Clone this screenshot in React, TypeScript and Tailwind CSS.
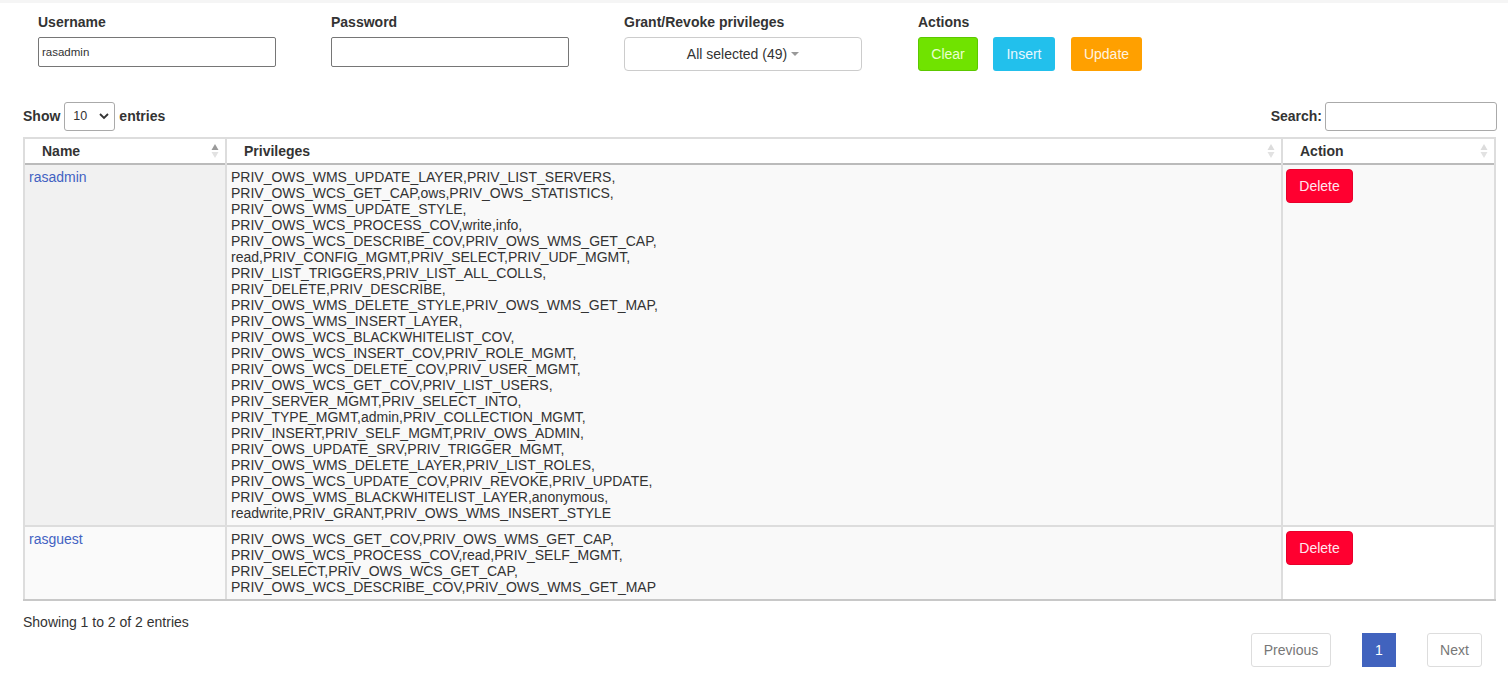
import React from "react";

const row1 = [
  "PRIV_OWS_WMS_UPDATE_LAYER,PRIV_LIST_SERVERS,",
  "PRIV_OWS_WCS_GET_CAP,ows,PRIV_OWS_STATISTICS,",
  "PRIV_OWS_WMS_UPDATE_STYLE,",
  "PRIV_OWS_WCS_PROCESS_COV,write,info,",
  "PRIV_OWS_WCS_DESCRIBE_COV,PRIV_OWS_WMS_GET_CAP,",
  "read,PRIV_CONFIG_MGMT,PRIV_SELECT,PRIV_UDF_MGMT,",
  "PRIV_LIST_TRIGGERS,PRIV_LIST_ALL_COLLS,",
  "PRIV_DELETE,PRIV_DESCRIBE,",
  "PRIV_OWS_WMS_DELETE_STYLE,PRIV_OWS_WMS_GET_MAP,",
  "PRIV_OWS_WMS_INSERT_LAYER,",
  "PRIV_OWS_WCS_BLACKWHITELIST_COV,",
  "PRIV_OWS_WCS_INSERT_COV,PRIV_ROLE_MGMT,",
  "PRIV_OWS_WCS_DELETE_COV,PRIV_USER_MGMT,",
  "PRIV_OWS_WCS_GET_COV,PRIV_LIST_USERS,",
  "PRIV_SERVER_MGMT,PRIV_SELECT_INTO,",
  "PRIV_TYPE_MGMT,admin,PRIV_COLLECTION_MGMT,",
  "PRIV_INSERT,PRIV_SELF_MGMT,PRIV_OWS_ADMIN,",
  "PRIV_OWS_UPDATE_SRV,PRIV_TRIGGER_MGMT,",
  "PRIV_OWS_WMS_DELETE_LAYER,PRIV_LIST_ROLES,",
  "PRIV_OWS_WCS_UPDATE_COV,PRIV_REVOKE,PRIV_UPDATE,",
  "PRIV_OWS_WMS_BLACKWHITELIST_LAYER,anonymous,",
  "readwrite,PRIV_GRANT,PRIV_OWS_WMS_INSERT_STYLE",
];
const row2 = [
  "PRIV_OWS_WCS_GET_COV,PRIV_OWS_WMS_GET_CAP,",
  "PRIV_OWS_WCS_PROCESS_COV,read,PRIV_SELF_MGMT,",
  "PRIV_SELECT,PRIV_OWS_WCS_GET_CAP,",
  "PRIV_OWS_WCS_DESCRIBE_COV,PRIV_OWS_WMS_GET_MAP",
];

function SortIcon({ active }: { active?: boolean }) {
  return (
    <svg width="8" height="18" viewBox="0 0 8 18" className="shrink-0">
      <path d="M4 2 L7.5 8 L0.5 8 Z" fill={active ? "#9a9a9a" : "#dcdcdc"} />
      <path d="M4 16 L7.5 10 L0.5 10 Z" fill="#e2e2e2" />
    </svg>
  );
}

function DeleteBtn() {
  return (
    <button className="h-[34px] w-[67px] rounded-[4px] border border-[#e8002a] bg-[#ff0030] text-[14px] text-[#ffe6ee]">
      Delete
    </button>
  );
}

export default function App() {
  return (
    <div
      className="min-h-[682px] bg-white text-[14px] text-[#333]"
      style={{ fontFamily: '"Liberation Sans", Arial, sans-serif' }}
    >
      <div className="h-[3px] bg-[#f5f5f5]" />
      {/* form row */}
      <div className="flex pl-[38px] pt-[11px]">
        <div className="w-[293px]">
          <div className="mb-[7px] h-[16px] text-[14px] font-bold leading-[16px]">Username</div>
          <div className="flex h-[30px] w-[238px] items-center rounded-[2px] border border-[#767676] px-[3px] pt-[1px] text-[11.5px]">
            rasadmin
          </div>
        </div>
        <div className="w-[293px]">
          <div className="mb-[7px] h-[16px] text-[14px] font-bold leading-[16px]">Password</div>
          <div className="h-[30px] w-[238px] rounded-[2px] border border-[#767676]" />
        </div>
        <div className="w-[294px]">
          <div className="mb-[7px] h-[16px] text-[14px] font-bold leading-[16px]">Grant/Revoke privileges</div>
          <div className="flex h-[34px] w-[238px] items-center justify-center gap-[4px] rounded-[4px] border border-[#ccc] text-[14px]">
            <span>All selected (49)</span>
            <svg width="8" height="5" viewBox="0 0 8 5" className="mt-[1px]">
              <path d="M0 0 L8 0 L4 4 Z" fill="#999" />
            </svg>
          </div>
        </div>
        <div>
          <div className="mb-[7px] h-[16px] text-[14px] font-bold leading-[16px]">Actions</div>
          <div className="flex gap-[15px]">
            <button className="h-[34px] w-[60px] rounded-[3px] border border-[#5cc800] bg-[#70e300] text-[14px] text-[#eaffd0]">
              Clear
            </button>
            <button className="h-[34px] w-[62px] rounded-[3px] bg-[#22c0ec] text-[14px] text-[#e8f8ff]">
              Insert
            </button>
            <button className="ml-[1px] h-[34px] w-[71px] rounded-[3px] bg-[#ffa000] text-[14px] text-[#fff3e0]">
              Update
            </button>
          </div>
        </div>
      </div>

      {/* table area */}
      <div className="ml-[23px] mr-[11px] mt-[31px]">
        <div className="flex items-center justify-between">
          <div className="flex items-center gap-[4px] font-bold">
            <span>Show</span>
            <div className="flex h-[29px] w-[51px] items-center justify-between rounded-[3px] border border-[#aaa] pl-[8px] pr-[5px] text-[12.5px] font-normal">
              <span>10</span>
              <svg width="10" height="7" viewBox="0 0 10 7">
                <path d="M1 1 L5 5 L9 1" fill="none" stroke="#333" strokeWidth="1.8" />
              </svg>
            </div>
            <span>entries</span>
          </div>
          <div className="flex items-center gap-[3px] font-bold">
            <span>Search:</span>
            <div className="h-[29px] w-[172px] rounded-[3px] border border-[#aaa]" />
          </div>
        </div>

        <table className="mt-[6px] w-[1473px] border-collapse text-[14px] leading-[16px]">
          <thead>
            <tr className="h-[26px] border-b-[2px] border-[#bbb]">
              <th className="w-[202px] border-2 border-b-0 border-[#ddd] pl-[17px] pr-[6px] text-left font-bold">
                <div className="flex items-center justify-between">
                  <span>Name</span>
                  <SortIcon active />
                </div>
              </th>
              <th className="w-[1056px] border-2 border-b-0 border-[#ddd] pl-[17px] pr-[6px] text-left font-bold">
                <div className="flex items-center justify-between">
                  <span>Privileges</span>
                  <SortIcon />
                </div>
              </th>
              <th className="border-2 border-b-0 border-[#ddd] pl-[17px] pr-[6px] text-left font-bold">
                <div className="flex items-center justify-between">
                  <span>Action</span>
                  <SortIcon />
                </div>
              </th>
            </tr>
          </thead>
          <tbody>
            <tr className="bg-[#f9f9f9]">
              <td className="border-2 border-t-0 border-[#ddd] bg-[#f1f1f1] px-[4px] pt-[4px] pb-[4px] align-top text-[#4262c2]">
                rasadmin
              </td>
              <td className="border-2 border-t-0 border-[#ddd] px-[4px] pt-[4px] pb-[4px] align-top">
                {row1.map((l, i) => (
                  <div key={i}>{l}</div>
                ))}
              </td>
              <td className="border-2 border-t-0 border-[#ddd] px-[3px] pt-[4px] pb-[4px] align-top">
                <DeleteBtn />
              </td>
            </tr>
            <tr className="border-b-[2px] border-[#c8c8c8] bg-white">
              <td className="border-2 border-[#ddd] border-b-[#c8c8c8] bg-[#fafafa] px-[4px] pt-[4px] pb-[4px] align-top text-[#4262c2]">
                rasguest
              </td>
              <td className="border-2 border-[#ddd] border-b-[#c8c8c8] bg-[#f9f9f9] px-[4px] pt-[4px] pb-[4px] align-top">
                {row2.map((l, i) => (
                  <div key={i}>{l}</div>
                ))}
              </td>
              <td className="border-2 border-[#ddd] border-b-[#c8c8c8] px-[3px] pt-[4px] pb-[4px] align-top">
                <DeleteBtn />
              </td>
            </tr>
          </tbody>
        </table>

        <div className="mt-[13px] leading-[16px]">Showing 1 to 2 of 2 entries</div>

        <div className="mt-[3px] flex justify-end pr-[15px]">
          <div className="flex h-[34px] w-[80px] items-center justify-center rounded-[3px] border border-[#ddd] text-[#777]">
            Previous
          </div>
          <div className="ml-[31px] flex h-[34px] w-[34px] items-center justify-center bg-[#4163be] text-white">
            1
          </div>
          <div className="ml-[31px] flex h-[34px] w-[55px] items-center justify-center rounded-[3px] border border-[#ddd] text-[#777]">
            Next
          </div>
        </div>
      </div>
    </div>
  );
}
